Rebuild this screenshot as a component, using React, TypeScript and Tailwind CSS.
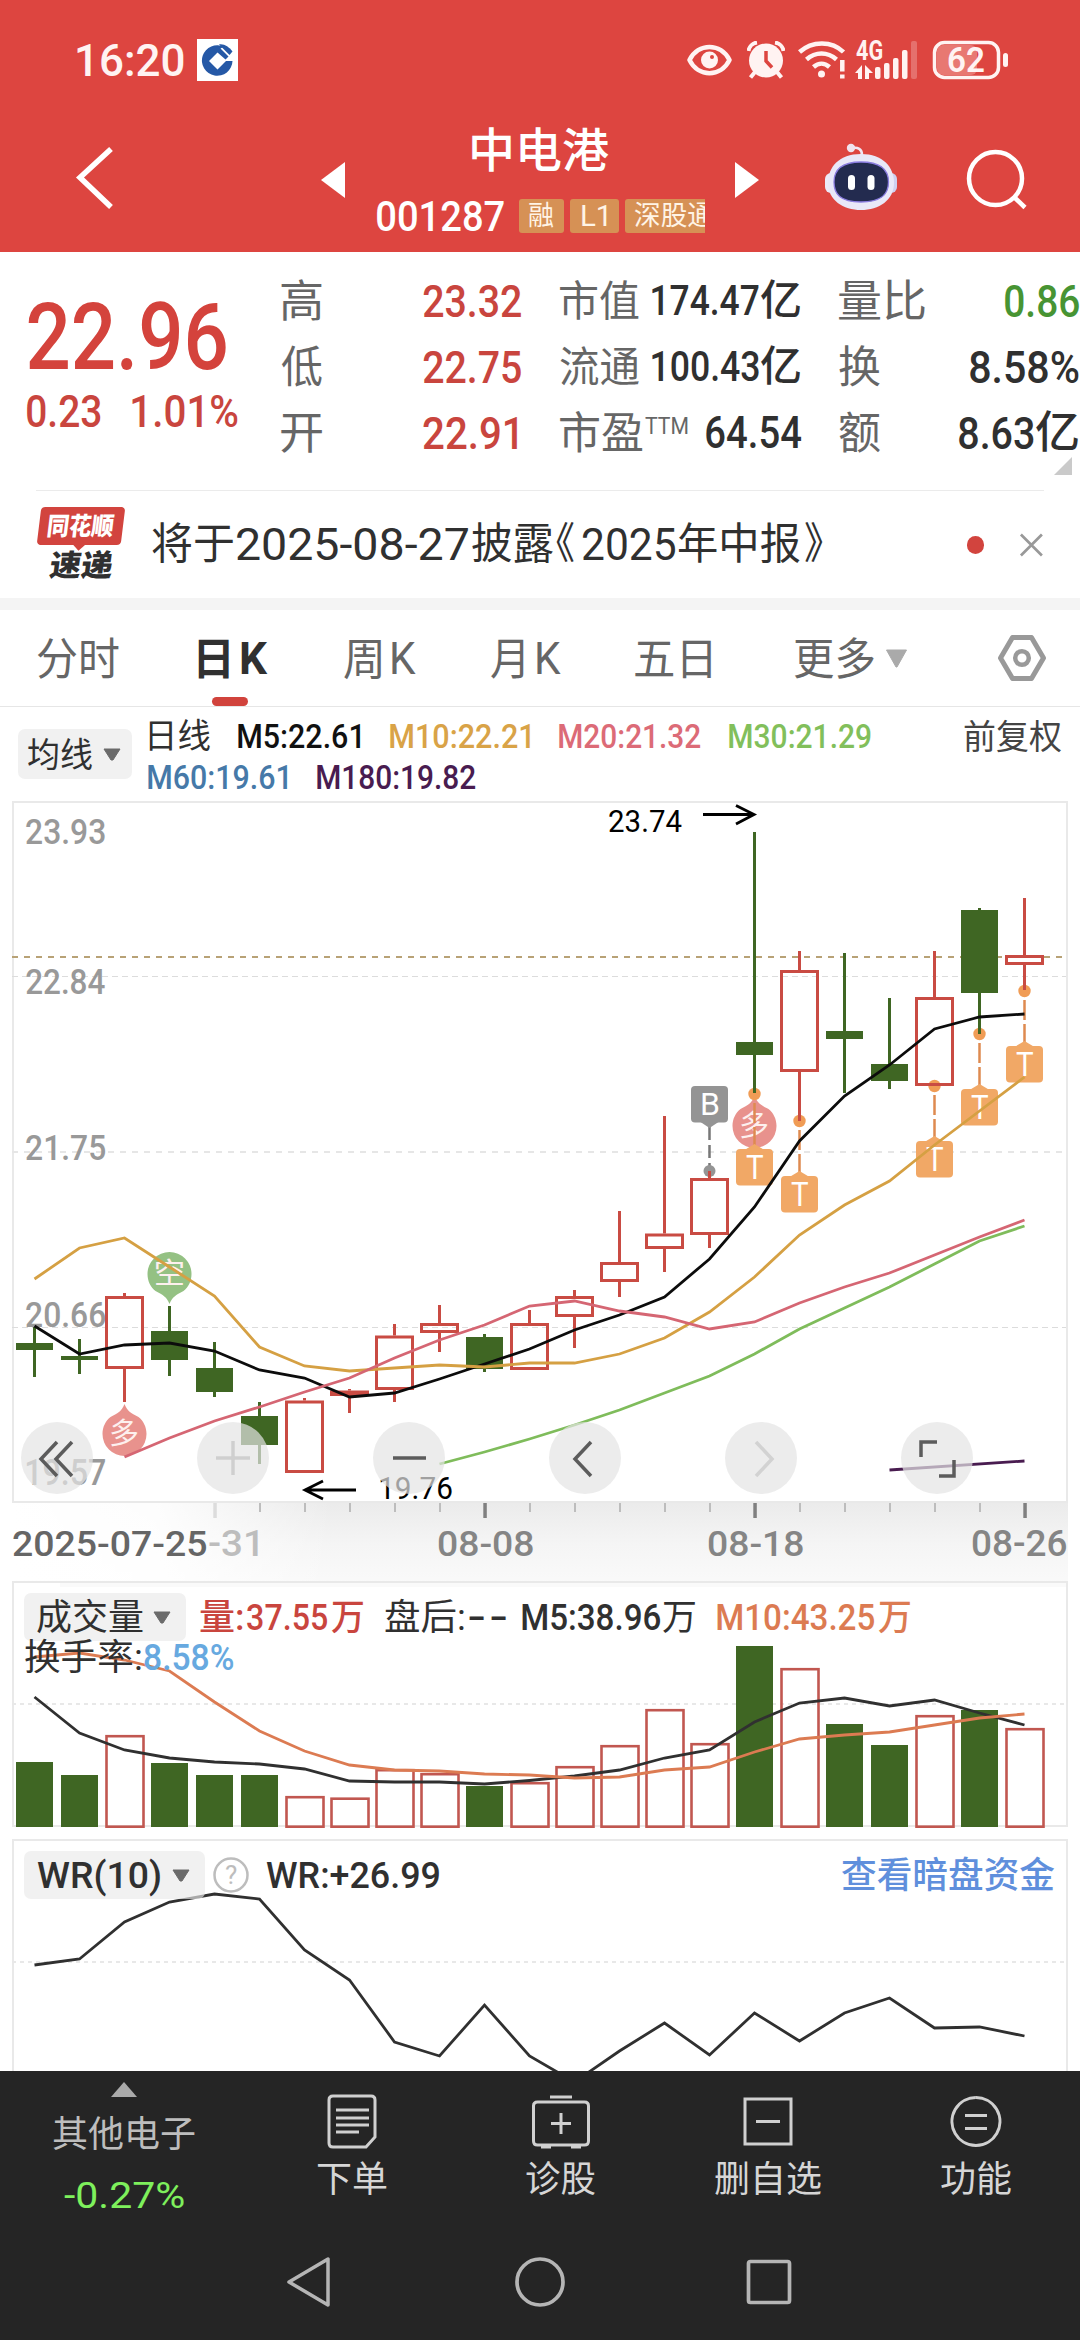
import { useLayoutEffect, useRef, useState, type ReactNode } from "react";

const FONT = "font-[Roboto,'Noto_Sans_CJK_SC',sans-serif]";

/** Measures the inked width of an element's text and returns the scale that makes it `width` wide. */
function useInkFit(text: string, width: number) {
  const ref = useRef<any>(null);
  const [fit, setFit] = useState({ s: 1, dx: 0 });
  useLayoutEffect(() => {
    const cs = getComputedStyle(ref.current);
    const ctx = document.createElement("canvas").getContext("2d")!;
    ctx.font = `${cs.fontWeight} ${cs.fontSize} ${cs.fontFamily}`;
    const m = ctx.measureText(text);
    const s = width / (m.actualBoundingBoxLeft + m.actualBoundingBoxRight);
    setFit({ s, dx: m.actualBoundingBoxLeft * s });
  }, [text, width]);
  return { ref, fit };
}

function Fit({ t, w, className = "" }: { t: string; w: number; className?: string }) {
  const { ref, fit } = useInkFit(t, w);
  return (
    <span className={`block shrink-0 whitespace-pre leading-none ${className}`} style={{ width: w }}>
      <span
        ref={ref}
        className="inline-block origin-left leading-none"
        style={{ transform: `translateX(${fit.dx}px) scaleX(${fit.s})` }}
      >
        {t}
      </span>
    </span>
  );
}

function Label({ t, x, y, w, className = "" }: { t: string; x: number; y: number; w: number; className?: string }) {
  const { ref, fit } = useInkFit(t, w);
  return (
    <text ref={ref} className={`${FONT} ${className}`} transform={`translate(${x + fit.dx} ${y}) scale(${fit.s} 1)`}>
      {t}
    </text>
  );
}

const X = (i: number) => 34.5 + 45 * i;
const line = (ys: number[], from = 0) => ys.map((y, i) => `${X(from + i)},${y}`).join(" ");

// [up, bodyTop, bodyBottom, high, low]
const CANDLES: [boolean, number, number, number, number][] = [
  [false, 1343, 1350, 1327, 1377],
  [false, 1356, 1360, 1339, 1374],
  [true, 1296, 1369, 1293, 1402],
  [false, 1331, 1360, 1306, 1376],
  [false, 1368, 1392, 1342, 1397],
  [false, 1416, 1445, 1402, 1464],
  [true, 1400.5, 1473, 1398, 1473],
  [true, 1390.5, 1396, 1389, 1413],
  [true, 1335.5, 1390, 1324, 1402],
  [true, 1323, 1333, 1305, 1352],
  [false, 1337, 1369, 1334, 1372],
  [true, 1323, 1370, 1310, 1370],
  [true, 1296, 1317, 1290, 1348],
  [true, 1262, 1282, 1211, 1297],
  [true, 1233.5, 1249, 1116, 1272],
  [true, 1178, 1235, 1171, 1248],
  [false, 1042, 1055, 832, 1093],
  [true, 970, 1072, 951, 1121],
  [false, 1031, 1039, 953, 1093],
  [false, 1064, 1081, 998, 1089],
  [true, 997, 1086, 951, 1086],
  [false, 910, 993, 908, 1034],
  [true, 955, 965, 898, 990],
];

const M5 = [1326, 1354, 1345, 1343, 1351, 1370, 1378, 1397, 1393, 1379, 1364, 1349, 1330, 1315, 1297, 1259, 1207, 1141, 1096, 1065, 1029, 1017, 1014];
const M10 = [1279, 1248, 1238, 1267, 1296, 1347, 1366, 1371, 1368, 1365, 1367, 1363, 1363, 1354, 1338, 1312, 1277, 1235, 1205, 1181, 1145, 1111, 1077];
const M20 = [1457, 1438, 1421, 1407, 1392, 1378, 1358, 1340, 1325, 1306, 1301, 1311, 1317, 1329, 1322, 1303, 1287, 1273, 1255, 1237, 1220];
const M30 = [1464, 1452, 1439, 1425, 1410, 1393, 1376, 1354, 1329, 1308, 1287, 1264, 1241, 1226];
const VOL_TOP = [1762, 1775, 1735, 1763, 1775, 1775, 1796, 1797.5, 1769, 1773, 1786, 1782, 1766, 1745, 1709, 1743, 1646, 1668, 1724, 1745, 1715, 1710, 1728];
const VM5 = [1697, 1733, 1750, 1758, 1762, 1764, 1769, 1781, 1782, 1782, 1784, 1780.5, 1776, 1770, 1758, 1750, 1722, 1703, 1698, 1706, 1700, 1713, 1725];
const VM10 = [1657, 1653, 1660, 1671, 1702, 1731, 1751, 1765, 1770, 1771, 1774, 1775, 1778, 1777, 1770, 1767, 1752, 1739, 1735, 1732, 1725, 1718, 1714];
const WR = [1965, 1959, 1922, 1902, 1894, 1899, 1950, 1980, 2042, 2056, 2005, 2056, 2082, 2051, 2023, 2055, 2013, 2041, 2013, 1998, 2028, 2027, 2036];

const RED = "#c94b43";
const GREEN = "#3f6623";

function StatusBar() {
  return (
    <div className="flex h-[44px] items-center text-[#fff3f2]">
      <Fit t="16:20" w={107} className="ml-[77px] text-[45px] font-medium" />
      <svg className="ml-[13px]" width="41" height="42" viewBox="0 0 41 42">
        <rect width="41" height="42" fill="#fff" />
        <path d="M27 7.800A15.300 15.300 0 1 0 35.500 22H29L20.500 30.500 12 22 20.500 13.500 28.500 20.500 31.500 17.500 23.500 9.500z" fill="#2558a6" />
        <path d="M20.500 14.500 27.500 21.500 20.500 28.500 13.500 21.500z" fill="#fff" />
        <path d="M22 5.500C27 4.500 32 8 35.500 12.500L32.500 16z" fill="#2558a6" />
      </svg>
      <svg className="ml-[449px]" width="45" height="32" viewBox="0 0 45 32" fill="none">
        <path d="M2.500 16C11-1.500 34-1.500 42.500 16 34 33.500 11 33.500 2.500 16z" stroke="#fff3f2" strokeWidth="4.500" strokeLinejoin="round" />
        <circle cx="22.500" cy="16" r="8.500" fill="#fff3f2" />
        <circle cx="25" cy="13" r="2" fill="#dd4540" />
      </svg>
      <svg className="ml-[15px]" width="38" height="38" viewBox="0 0 38 38" fill="none">
        <circle cx="19" cy="19.500" r="17" fill="#fff3f2" />
        <path d="M1.500 10A10 10 0 0 1 10 1.500M28 1.500A10 10 0 0 1 36.500 10" stroke="#fff3f2" strokeWidth="4" />
        <path d="M8 31 3.500 36.500M30 31 34.500 36.500" stroke="#fff3f2" strokeWidth="4" />
        <path d="M19 10v10l6 6.500" stroke="#dd4540" strokeWidth="3.500" />
      </svg>
      <svg className="ml-[13px]" width="49" height="38" viewBox="0 0 49 38" fill="none" stroke="#fff3f2" strokeWidth="4.500">
        <path d="M1.500 11C14-.5 34-.5 45.500 11M8.500 18.500c9-8 21-8 30 0M15.500 26c5-4.500 11-4.500 16 0" />
        <circle cx="23.500" cy="33" r="3.500" fill="#fff3f2" stroke="none" />
        <path d="M44.300 19v11.500M44.300 33.500v4" />
      </svg>
      <svg className="ml-[8px]" width="64" height="50" viewBox="856 35 64 50" fill="#fff3f2">
        <Label t="4G" x={857} y={60} w={26} className="text-[27px] font-bold" />
        <path d="M856 73 863 65v14h-4v-6zM866 65l8 8h-4v6h-4z" />
        <rect x="876" y="67" width="5.500" height="12" rx="2" />
        <rect x="885" y="63" width="5.500" height="16" rx="2" />
        <rect x="894" y="58" width="5.500" height="21" rx="2" />
        <rect x="903" y="50" width="5.500" height="29" rx="2" />
        <rect x="912" y="41" width="6" height="38" rx="2" opacity=".25" />
      </svg>
      <svg className="ml-[13px]" width="77" height="40" viewBox="933 40 77 40">
        <rect x="938" y="45" width="40" height="30" rx="6" fill="#e87872" />
        <rect x="935.500" y="42.500" width="64" height="35" rx="10" fill="none" stroke="#fff3f2" strokeWidth="3.500" />
        <rect x="1004" y="53" width="5" height="14" rx="2.500" fill="#fff3f2" />
        <Label t="62" x={949} y={72} w={36} className="fill-[#fff3f2] text-[35px] font-semibold" />
      </svg>
    </div>
  );
}

function Robot() {
  return (
    <svg width="72" height="68" viewBox="0 0 72 68">
      <path d="M27 5c6-1 10 1 10 7" fill="none" stroke="#f1e6f3" strokeWidth="2.500" />
      <circle cx="26" cy="5" r="4.200" fill="#f0e3ee" />
      <rect x="0" y="30" width="12" height="20" rx="6" fill="#eceaf8" />
      <rect x="60" y="30" width="12" height="20" rx="6" fill="#cfd0f0" />
      <path d="M36 11c22 0 33 13 33 29 0 17-15 27-33 27S3 57 3 40c0-16 11-29 33-29z" fill="#e9e8f8" />
      <path d="M36 19c20 0 27.500 8 27.500 20S57 59 36 59 9 51 9 39s7-20 27-20z" fill="#232b4f" stroke="#8b7de0" strokeWidth="1.300" />
      <rect x="23" y="32" width="7" height="15" rx="3.500" fill="#fff" />
      <rect x="42.500" y="32" width="7" height="15" rx="3.500" fill="#fff" />
    </svg>
  );
}

function Header() {
  return (
    <header className="h-[252px] bg-[#dd4540] pt-[38px] text-white">
      <StatusBar />
      <div className="flex h-[170px] items-start">
        <svg className="ml-[74px] mt-[60px]" width="42" height="72" viewBox="0 0 42 72" fill="none">
          <path d="M37 7 6 35.500 37 65" stroke="#fff" strokeWidth="5.500" />
        </svg>
        <svg className="ml-[205px] mt-[80px]" width="24" height="36" viewBox="0 0 24 36">
          <path d="M24 0v36L0 18z" fill="#fff" />
        </svg>
        <div className="ml-[32px] mt-[45px] w-[328px]">
          <Fit t="中电港" w={137} className="ml-[95px] text-[47px] font-medium" />
          <div className="mt-[25px] flex h-[34px] items-center">
            <Fit t="001287" w={127} className="text-[43px] font-medium" />
            <div className="ml-[15px] flex h-[34px] items-center text-[#fff4e6]">
              <span className="flex h-[34px] w-[45px] shrink-0 items-center justify-center rounded-[3px] bg-[#d69155]">
                <Fit t="融" w={25} className="text-[27px]" />
              </span>
              <span className="ml-[6px] flex h-[34px] w-[49px] shrink-0 items-center justify-center rounded-[3px] bg-[#d69155]">
                <Fit t="L1" w={25} className="text-[29px]" />
              </span>
              <span className="ml-[6px] flex h-[34px] w-[80px] shrink-0 items-center overflow-hidden rounded-l-[3px] bg-[#d69155] pl-[10px]">
                <Fit t="深股通" w={79} className="text-[27px]" />
              </span>
            </div>
          </div>
        </div>
        <svg className="ml-[30px] mt-[80px]" width="24" height="36" viewBox="0 0 24 36">
          <path d="M0 0v36l24-18z" fill="#fff" />
        </svg>
        <div className="ml-[66px] mt-[61px]">
          <Robot />
        </div>
        <svg className="ml-[68px] mt-[66px]" width="64" height="64" viewBox="0 0 64 64" fill="none" stroke="#fff" strokeWidth="4.500">
          <circle cx="30.500" cy="30.500" r="26.500" />
          <path d="M49 49 60 59.500" />
        </svg>
      </div>
    </header>
  );
}

function StatRow({ children }: { children: ReactNode }) {
  return <div className="flex h-[66px] items-center text-[#666]">{children}</div>;
}

function Quote() {
  const dark = "font-medium text-[#303030]";
  const red = "font-medium text-[#c9453e]";
  return (
    <section className="relative flex h-[238px]">
      <div className="w-[281px] shrink-0 font-medium text-[#d4433c]">
        <Fit t="22.96" w={198} className="ml-[28px] mt-[40px] text-[92px]" />
        <div className="mt-[5px] flex text-[45px] text-[#c9453e]">
          <Fit t="0.23" w={74} className="ml-[27px]" />
          <Fit t="1.01%" w={106} className="ml-[31px]" />
        </div>
      </div>
      <div className="w-[279px] shrink-0 pt-[16px]">
        {[["高", "23.32"], ["低", "22.75"], ["开", "22.91"]].map(([k, v]) => (
          <StatRow key={k}>
            <Fit t={k} w={41} className="mt-[1px] text-[44px]" />
            <Fit t={v} w={v === "22.91" ? 94 : 98} className={`ml-[101px] text-[45px] ${red}`} />
          </StatRow>
        ))}
      </div>
      <div className="w-[279px] shrink-0 pt-[16px]">
        {[["市值", "174.47"], ["流通", "100.43"]].map(([k, v]) => (
          <StatRow key={k}>
            <Fit t={k} w={79} className="mt-[2px] text-[42px]" />
            <Fit t={v} w={107} className={`ml-[13px] text-[42px] ${dark}`} />
            <Fit t="亿" w={39} className={`ml-[2px] text-[42px] ${dark}`} />
          </StatRow>
        ))}
        <StatRow>
          <Fit t="市盈" w={83} className="mt-[1px] text-[44px]" />
          <Fit t="TTM" w={43} className="-mt-[14px] ml-[2px] text-[23px]" />
          <Fit t="64.54" w={95} className={`ml-[18px] text-[44px] ${dark}`} />
        </StatRow>
      </div>
      <div className="grow pt-[16px]">
        <StatRow>
          <Fit t="量比" w={86} className="mt-[2px] text-[44px]" />
          <Fit t="0.86" w={74} className="ml-[80px] text-[45px] font-medium text-[#479433]" />
        </StatRow>
        <StatRow>
          <Fit t="换" w={41} className="mt-[2px] text-[44px]" />
          <Fit t="8.58%" w={109} className={`ml-[90px] text-[45px] ${dark}`} />
        </StatRow>
        <StatRow>
          <Fit t="额" w={41} className="mt-[1px] text-[44px]" />
          <Fit t="8.63" w={75} className={`ml-[79px] text-[45px] ${dark}`} />
          <Fit t="亿" w={42} className={`ml-[2px] text-[44px] ${dark}`} />
        </StatRow>
      </div>
      <svg className="absolute right-[8px] top-[205px]" width="18" height="18" viewBox="0 0 18 18">
        <path d="M18 0v18H0z" fill="#cacaca" />
      </svg>
    </section>
  );
}

function News() {
  return (
    <section className="mx-[36px] flex h-[108px] items-center border-t border-[#ebebeb] text-[#303030]">
      <div className="flex h-[76px] w-[90px] shrink-0 flex-col items-center">
        <div className="relative flex h-[38px] w-[84px] -skew-x-[7deg] items-center justify-center rounded-[4px] bg-[#d2443e]">
          <Fit t="同花顺" w={66} className="text-[25px] font-black text-white" />
          <span className="absolute -bottom-[4px] left-[38px] size-[9px] rotate-45 bg-[#d2443e]" />
        </div>
        <Fit t="速递" w={63} className="mt-[6px] -skew-x-[8deg] text-[30px] font-black" />
      </div>
      <Fit t="将于" w={81} className="ml-[26px] text-[43px]" />
      <Fit t="2025-08-27" w={231} className="ml-[4px] text-[44px]" />
      <Fit t="披露" w={81} className="ml-[4px] text-[43px]" />
      <Fit t="《" w={18} className="ml-[3px] text-[43px]" />
      <Fit t="2025" w={92} className="ml-[9px] text-[44px]" />
      <Fit t="年中报" w={121} className="ml-[4px] text-[43px]" />
      <Fit t="》" w={18} className="ml-[5px] text-[43px]" />
      <span className="ml-[144px] size-[18px] rounded-full bg-[#d2443e]" />
      <svg className="ml-[35px]" width="26" height="26" viewBox="0 0 26 26">
        <path d="M2 2 24 24M24 2 2 24" stroke="#999" strokeWidth="2.800" />
      </svg>
    </section>
  );
}

function Tabs() {
  return (
    <nav className="flex h-[97px] items-center border-b border-[#e6e6e6] text-[44px] text-[#666]">
      <Fit t="分时" w={82} className="ml-[37px] mt-[3px]" />
      <span className="relative ml-[79px] flex h-full items-center text-[#303030]">
        <Fit t="日" w={31} className="mt-[3px] font-bold" />
        <Fit t="K" w={27} className="ml-[12px] mt-[2px] font-bold" />
        <span className="absolute bottom-0 left-[14px] h-[9px] w-[36px] rounded-full bg-[#d1433c]" />
      </span>
      <Fit t="周" w={37} className="ml-[76px] mt-[3px]" />
      <Fit t="K" w={24} className="ml-[11px] mt-[2px]" />
      <Fit t="月" w={33} className="ml-[75px] mt-[3px]" />
      <Fit t="K" w={24} className="ml-[13px] mt-[2px]" />
      <Fit t="五日" w={76} className="ml-[74px] mt-[3px]" />
      <Fit t="更多" w={79} className="ml-[84px] mt-[3px]" />
      <svg className="ml-[11px]" width="23" height="19" viewBox="0 0 23 19">
        <path d="M1.500 1h20L12 18h-1z" fill="#aaa" stroke="#aaa" strokeLinejoin="round" />
      </svg>
      <svg className="ml-[89px]" width="50" height="48" viewBox="0 0 50 48" fill="none" stroke="#999" strokeWidth="5" strokeLinejoin="round">
        <path d="M15.500 3.500h19L46.500 24l-12 20.500h-19L3.500 24z" />
        <circle cx="25" cy="24" r="6.800" strokeWidth="4.500" />
      </svg>
    </nav>
  );
}

function Caret({ className = "" }: { className?: string }) {
  return (
    <svg className={className} width="18" height="13" viewBox="0 0 18 13">
      <path d="M1 1h16L10 12H8z" fill="#6b6b6b" stroke="#6b6b6b" strokeLinejoin="round" />
    </svg>
  );
}

function Legend() {
  return (
    <div className="flex h-[95px] text-[34px]">
      <button className="ml-[18px] mt-[22px] flex h-[50px] w-[114px] items-center rounded-[7px] bg-[#f1f1f1] text-[#303030]">
        <Fit t="均线" w={64} className="ml-[10px] mt-[2px]" />
        <Caret className="ml-[11px]" />
      </button>
      <div className="ml-[15px] w-[800px] pt-[12px] font-medium">
        <div className="flex h-[34px] items-center">
          <Fit t="日线" w={61} className="ml-[2px] font-normal text-[#303030]" />
          <Fit t="M5:22.61" w={122} className="ml-[28px] text-[#111]" />
          <Fit t="M10:22.21" w={140} className="ml-[30px] text-[#d9a347]" />
          <Fit t="M20:21.32" w={142} className="ml-[29px] text-[#dc6b77]" />
          <Fit t="M30:21.29" w={142} className="ml-[28px] text-[#82bf5b]" />
        </div>
        <div className="mt-[7px] flex h-[34px] items-center">
          <Fit t="M60:19.61" w={139} className="ml-[1px] text-[#4679a8]" />
          <Fit t="M180:19.82" w={159} className="ml-[30px] text-[#491c50]" />
        </div>
      </div>
      <Fit t="前复权" w={97} className="ml-[17px] mt-[13px] text-[#444]" />
    </div>
  );
}

function Signal({ x, y, t, color, up }: { x: number; y: number; t: string; color: string; up: boolean }) {
  return (
    <g transform={`translate(${x} ${y})`}>
      <g transform={up ? undefined : "scale(1 -1)"}>
        <path d="M-14-17C-6-21-3-23 0-30 3-23 6-21 14-17 19-13 22-7 22 0A22 22 0 0 1-22 0C-22-7-19-13-14-17z" fill={color} />
      </g>
      <Label t={t} x={-13.5} y={10} w={27} className="fill-[#fdf0ee] text-[29px]" />
    </g>
  );
}

function Pin({ i, dot }: { i: number; dot: number }) {
  const x = X(i);
  return (
    <g>
      <circle cx={x} cy={dot} r="6.200" fill="#f09c55" />
      <path d={`M${x} ${dot + 9}V${dot + 52}`} stroke="#de8a50" strokeWidth="2.500" strokeDasharray="20 4" />
      <path d={`M${x - 10} ${dot + 56}L${x} ${dot + 50}l10 6z`} fill="#f1a866" />
      <rect x={x - 18.500} y={dot + 55} width="37" height="36.500" rx="4" fill="#f1a866" />
      <Label t="T" x={x - 8.500} y={dot + 85} w={17} className="fill-white text-[33px]" />
    </g>
  );
}

function Arrow({ d }: { d: string }) {
  return <path d={d} fill="none" stroke="#000" strokeWidth="2.800" />;
}

function KChart() {
  return (
    <svg className="block" width="1080" height="780" viewBox="0 801 1080 780">
      <defs>
        <linearGradient id="axisFade" x1="0" x2="0" y1="0" y2="1">
          <stop offset="0" stopColor="#ebebeb" />
          <stop offset=".5" stopColor="#f5f5f5" />
          <stop offset="1" stopColor="#fafafa" />
        </linearGradient>
        <linearGradient id="axisVeil" x1="0" x2="1" y1="0" y2="0">
          <stop offset="0" stopColor="#fff" />
          <stop offset=".45" stopColor="#fff" stopOpacity=".9" />
          <stop offset="1" stopColor="#fff" stopOpacity="0" />
        </linearGradient>
      </defs>
      <rect x="12" y="1503" width="1056" height="84" fill="url(#axisFade)" />
      <rect x="12" y="1503" width="320" height="84" fill="url(#axisVeil)" />
      <rect x="13" y="802" width="1054" height="700" fill="none" stroke="#e9e9e9" strokeWidth="2" />
      <path d="M12 976.500H1066M12 1327.500H1066" stroke="#dcdcdc" strokeWidth="1.200" strokeDasharray="6 4" />
      <path d="M12 1152H1066" stroke="#e6e6e6" strokeWidth="2" strokeDasharray="6 6" />
      <path d="M12 957H1066" stroke="#b8a276" strokeWidth="1.800" strokeDasharray="6 6" />
      {([["23.93", 844], ["22.84", 994], ["21.75", 1160], ["20.66", 1327], ["19.57", 1485]] as [string, number][]).map(([t, y]) => (
        <Label key={t} t={t} x={26} y={y} w={79} className="fill-[#999] text-[36px] font-medium" />
      ))}
      <Signal x={X(2)} y={1434} t="多" color="#e8928d" up />
      <Signal x={X(3)} y={1274} t="空" color="#94c183" up={false} />
      <Signal x={X(16)} y={1126} t="多" color="#e8928d" up />
      {([[16, 1094], [17, 1121], [20, 1086], [21, 1034], [22, 991]] as [number, number][]).map(([i, d]) => (
        <Pin key={i} i={i} dot={d} />
      ))}
      <path d={`M${X(15)} 1127V1166`} stroke="#777" strokeWidth="2.500" strokeDasharray="13 5" />
      <circle cx={X(15)} cy="1171" r="6" fill="#949494" />
      <rect x={X(15) - 18.500} y="1086" width="37" height="36.500" rx="4" fill="#949494" />
      <path d={`M${X(15) - 9} 1122h18l-9 6z`} fill="#949494" />
      <Label t="B" x={X(15) - 7.500} y={1115} w={17} className="fill-white text-[32px]" />
      {CANDLES.map(([up, t, b, h, l], i) =>
        up ? (
          <g key={i} stroke={RED} strokeWidth="3" fill="none">
            <path d={`M${X(i)} ${h}V${t}M${X(i)} ${b}V${l}`} />
            <rect x={X(i) - 18} y={t + 1.5} width="36" height={Math.max(b - t - 3, 2)} />
          </g>
        ) : (
          <g key={i} fill={GREEN}>
            <rect x={X(i) - 1.5} y={h} width="3" height={l - h} />
            <rect x={X(i) - 18.5} y={t} width="37" height={b - t} />
          </g>
        ),
      )}
      <g fill="none" strokeWidth="2.800">
        <polyline points={line(M5)} stroke="#0c0c0c" />
        <polyline points={line(M10)} stroke="#d5a043" />
        <polyline points={line(M20, 2)} stroke="#d56673" />
        <polyline points={line(M30, 9)} stroke="#7fbc5b" />
        <path d={`M${X(19)} 1470 ${X(22)} 1461`} stroke="#491c50" />
      </g>
      <Label t="23.74" x={609} y={832} w={73} className="fill-black text-[32px]" />
      <Arrow d="M703 814.500H753M736 805.500 754 814.500 736 824" />
      <Label t="19.76" x={380} y={1499} w={72} className="fill-black text-[32px]" />
      <Arrow d="M356 1490H306M323 1481 305 1490 323 1499" />
      {CANDLES.map((_, i) =>
        i < 4 ? null : (i - 4) % 6 === 0 ? (
          <rect key={i} x={X(i) - 1.2} y="1503" width="3.500" height="15" fill={i === 4 ? "#dcdcdc" : "#808080"} />
        ) : (
          <rect key={i} x={X(i) - 0.5} y="1503" width="2" height="9" fill="#bdbdbd" />
        ),
      )}
      <Label t="2025-07-25" x={13} y={1556} w={193} className="fill-[#666] text-[36px] font-medium" />
      <Label t="-31" x={209} y={1556} w={49} className="fill-[#bdbdbd] text-[36px] font-medium" />
      <Label t="08-08" x={438} y={1556} w={95} className="fill-[#858585] text-[36px] font-medium" />
      <Label t="08-18" x={708} y={1556} w={95} className="fill-[#858585] text-[36px] font-medium" />
      <Label t="08-26" x={972} y={1556} w={94} className="fill-[#858585] text-[36px] font-medium" />
    </svg>
  );
}

const CONTROLS = [
  { d: "M36 20 20 37 36 54M51 20 35 37 51 54", c: "#5c5c5c" },
  { d: "M19 36H53M36 19V53", c: "#cfcfcf" },
  { d: "M20 36H53", c: "#5c5c5c" },
  { d: "M42 20 26 37 42 54", c: "#5c5c5c" },
  { d: "M31 20 47 37 31 54", c: "#d2d2d2" },
  { d: "M20 35V20H36M38 54H53V38", c: "#5c5c5c" },
];

function Controls() {
  return (
    <div className="absolute left-[21px] top-[621px] flex gap-[104px]">
      {CONTROLS.map((k) => (
        <button key={k.d} className="size-[72px] rounded-full bg-[#e4e4e4]/70">
          <svg width="72" height="72" viewBox="0 0 72 72" fill="none" stroke={k.c} strokeWidth="3.500">
            <path d={k.d} />
          </svg>
        </button>
      ))}
    </div>
  );
}

function Volume() {
  return (
    <section className="relative h-[258px]">
      <svg className="block" width="1080" height="258" viewBox="0 1581 1080 258">
        <rect x="60" y="1581" width="1007" height="6" fill="#fafafa" />
        <rect x="13" y="1582" width="1054" height="244" fill="none" stroke="#e9e9e9" strokeWidth="2" />
        <path d="M12 1704H1066" stroke="#e8e8e8" strokeWidth="2" strokeDasharray="4 4" />
        {VOL_TOP.map((t, i) =>
          CANDLES[i][0] ? (
            <rect key={i} x={X(i) - 18} y={t + 1.2} width="37" height={1825.5 - t} fill="none" stroke="#c15750" strokeWidth="2.600" />
          ) : (
            <rect key={i} x={X(i) - 18.5} y={t} width="37" height={1827 - t} fill={GREEN} />
          ),
        )}
        <g fill="none" strokeWidth="2.800">
          <polyline points={line(VM5)} stroke="#303030" />
          <polyline points={line(VM10)} stroke="#dc7b52" />
        </g>
      </svg>
      <div className="absolute inset-x-0 top-[12px] text-[36px] font-medium text-[#303030]">
        <div className="flex h-[48px] items-center">
          <button className="ml-[24px] flex h-[48px] w-[162px] items-center rounded-[7px] bg-[#f1f1f1]">
            <Fit t="成交量" w={106} className="ml-[13px] mt-[2px] font-normal" />
            <Caret className="ml-[10px]" />
          </button>
          <Fit t="量:" w={43} className="ml-[14px] mt-[2px] text-[#c9453e]" />
          <Fit t="37.55" w={80} className="ml-[4px] mt-[2px] text-[#c9453e]" />
          <Fit t="万" w={32} className="ml-[4px] mt-[2px] text-[#c9453e]" />
          <Fit t="盘后:" w={79} className="ml-[22px] mt-[2px] font-normal" />
          <Fit t="-" w={15} className="ml-[5px] mt-[2px]" />
          <Fit t="-" w={15} className="ml-[7px] mt-[2px]" />
          <Fit t="M5:38.96" w={138} className="ml-[16px] mt-[2px]" />
          <Fit t="万" w={32} className="ml-[3px] mt-[2px] font-normal" />
          <Fit t="M10:43.25" w={157} className="ml-[22px] mt-[2px] text-[#dc7b52]" />
          <Fit t="万" w={32} className="ml-[4px] mt-[2px] text-[#dc7b52]" />
        </div>
        <div className="mt-[-1px] flex h-[36px] items-center">
          <Fit t="换手率:" w={116} className="ml-[25px] font-normal" />
          <Fit t="8.58%" w={89} className="ml-[3px] text-[#67a9e0]" />
        </div>
      </div>
    </section>
  );
}

function WrPanel() {
  return (
    <section className="relative h-[232px] overflow-hidden">
      <svg className="block" width="1080" height="232" viewBox="0 1839 1080 232">
        <path d="M13 2071V1840H1067V2071" fill="none" stroke="#e9e9e9" strokeWidth="2" />
        <path d="M12 1962H1066" stroke="#e8e8e8" strokeWidth="2" strokeDasharray="4 4" />
        <polyline points={line(WR)} fill="none" stroke="#303030" strokeWidth="2.800" />
      </svg>
      <div className="absolute inset-x-0 top-[12px] flex h-[48px] items-center text-[37px] text-[#303030]">
        <button className="ml-[24px] flex h-[48px] w-[181px] items-center rounded-[7px] bg-[#e9e9e9]/65">
          <Fit t="WR(10)" w={123} className="ml-[13px] font-medium" />
          <Caret className="ml-[12px]" />
        </button>
        <svg className="ml-[8px]" width="36" height="36" viewBox="0 0 36 36">
          <circle cx="18" cy="18" r="16.500" fill="none" stroke="#bdbdbd" strokeWidth="2.500" />
          <Label t="?" x={12} y={27} w={12} className="fill-[#bdbdbd] text-[26px]" />
        </svg>
        <Fit t="WR:+26.99" w={173} className="ml-[17px] font-medium" />
        <Fit t="查看暗盘资金" w={213} className="ml-[403px] mt-[2px] text-[36px] font-medium text-[#5f8fdc]" />
      </div>
    </section>
  );
}

function BottomBar() {
  const items = [
    { t: "下单", w: 70, cell: "w-[210px]", icon: "M8 2H44Q48 2 48 6V43L39 53H6Q2 53 2 49V6Q2 2 6 2zM9 16H42M9 24H42M9 31H42M9 38H32" },
    { t: "诊股", w: 69, cell: "w-[207px]", icon: "M-2.500 12Q-2.500 8 1.500 8H48.500Q52.500 8 52.500 12V47Q52.500 51 48.500 51H1.500Q-2.500 51-2.500 47zM14 3H36M25 19V40M15 29.500H35M5 53H15M35 53H45" },
    { t: "删自选", w: 106, cell: "w-[208px]", icon: "M2 5H48V50H2zM13 27.500H37" },
    { t: "功能", w: 70, cell: "w-[208px]", icon: "M25 3.500A24 24 0 1 1 24.900 3.500M14 21.500H36M14 34.500H36" },
  ];
  return (
    <footer className="h-[269px] bg-[#252525] text-[#d6d6d6]">
      <div className="flex h-[140px]">
        <div className="flex w-[247px] flex-col items-center pt-[11px]">
          <svg className="shrink-0" width="26" height="15" viewBox="0 0 26 15">
            <path d="M13 0 26 15H0z" fill="#aaa" />
          </svg>
          <Fit t="其他电子" w={142} className="mt-[20px] text-[36px] text-[#bdbdbd]" />
          <Fit t="-0.27%" w={120} className="mt-[24px] text-[37px] text-[#7ef05c]" />
        </div>
        {items.map((it) => (
          <div key={it.t} className={`flex flex-col items-center pt-[23px] ${it.cell}`}>
            <svg className="shrink-0" width="60" height="58" viewBox="-5 0 60 58" fill="none" stroke="#d0d0d0" strokeWidth="3">
              <path d={it.icon} />
            </svg>
            <Fit t={it.t} w={it.w} className="mt-[10px] text-[36px]" />
          </div>
        ))}
      </div>
      <div className="flex h-[142px] items-center">
        <svg className="ml-[286px]" width="46" height="52" viewBox="0 0 46 52" fill="none" stroke="#b5b5b5" strokeWidth="3.500" strokeLinejoin="round">
          <path d="M42 3V49L3 26z" />
        </svg>
        <svg className="ml-[183px]" width="50" height="50" viewBox="0 0 50 50" fill="none" stroke="#b5b5b5" strokeWidth="3.700">
          <circle cx="25" cy="25" r="23" />
        </svg>
        <svg className="ml-[181px]" width="46" height="46" viewBox="0 0 46 46" fill="none" stroke="#b5b5b5" strokeWidth="3.700">
          <rect x="2.500" y="2.500" width="41" height="41" rx="2" />
        </svg>
      </div>
    </footer>
  );
}

export default function App() {
  return (
    <main className={`h-[2340px] w-[1080px] overflow-hidden bg-white ${FONT}`}>
      <Header />
      <Quote />
      <News />
      <div className="h-[12px] bg-[#f4f4f4]" />
      <Tabs />
      <Legend />
      <div className="relative -mt-px h-[780px]">
        <KChart />
        <Controls />
      </div>
      <Volume />
      <WrPanel />
      <BottomBar />
    </main>
  );
}
